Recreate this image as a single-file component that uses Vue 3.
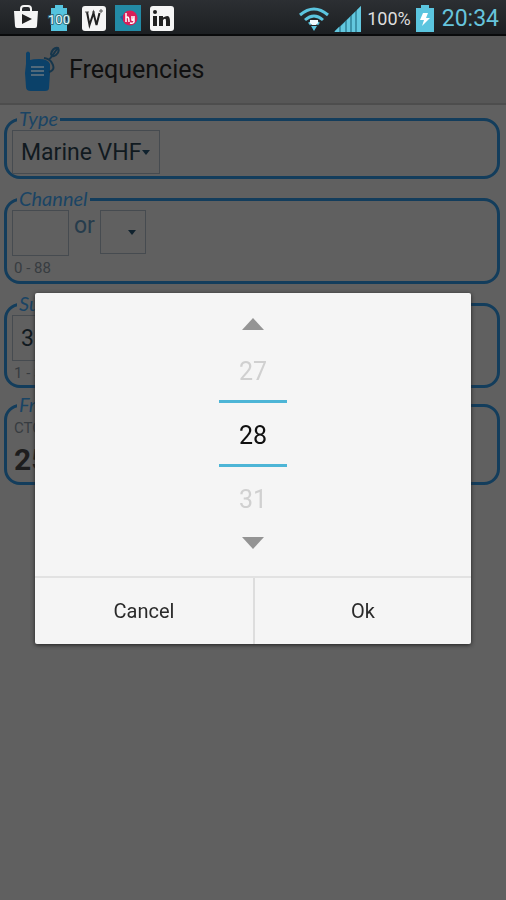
<script setup>
import { ref, computed } from 'vue'

const options = [26, 27, 28, 31, 33]
const index = ref(2)
const open = ref(true)
const type = ref('Marine VHF')
const channel = ref('')
const channelPick = ref('')
const sub = ref('38')

const previous = computed(() => options[index.value - 1])
const current = computed(() => options[index.value])
const next = computed(() => options[index.value + 1])

function step(by) {
  index.value = Math.min(options.length - 2, Math.max(1, index.value + by))
}
</script>

<template>
  <div class="screen">
    <header class="status">
      <div class="notices">
        <svg width="26" height="28" viewBox="0 0 26 28" aria-hidden="true">
          <path d="M8 8V5Q8 2 11 2H15Q18 2 18 5V8" fill="none" stroke="#f5f5f5" stroke-width="2" />
          <path d="M1 7H25L24 22Q24 24 22 24H4Q2 24 2 22Z" fill="#f5f5f5" />
          <path d="M9 10L19 15L9 20Z" fill="#222" />
        </svg>
        <svg class="charge" width="24" height="28" viewBox="0 0 24 28" aria-hidden="true">
          <path d="M8 1H16V4H20V10L18 13L20 19V27H4V19L6 13L4 10V4H8Z" fill="#55c4df" />
          <text x="12" y="20" text-anchor="middle" font-size="13" fill="#e9fbff" stroke="#316d7b" stroke-width="2" paint-order="stroke">100</text>
        </svg>
        <svg width="26" height="28" viewBox="0 0 26 28" aria-hidden="true">
          <rect x="1" y="2" width="24" height="25" rx="3" fill="#f5f5f5" />
          <path d="M6 8L8.500 21L12.500 9L15.500 21L18.500 9" fill="none" stroke="#222" stroke-width="2" />
          <path d="M4 8H8M11 8H14M20 5V9M18 7H22" stroke="#555" stroke-width="1" />
        </svg>
        <svg width="26" height="28" viewBox="0 0 26 28" aria-hidden="true">
          <rect y="1" width="26" height="26" fill="#238aa5" />
          <circle cx="15" cy="14" r="7.500" fill="#d91e58" />
          <path d="M5 13L8 11V17Z" fill="#285ca0" />
          <path d="M11 9V18M11 14Q14 11 14 18M17 12V16Q19 17 19 12V18Q18 20 15 19" fill="none" stroke="#fff" stroke-width="1.500" />
        </svg>
        <svg width="26" height="28" viewBox="0 0 26 28" aria-hidden="true">
          <rect x="1" y="2" width="24" height="25" rx="3" fill="#f5f5f5" />
          <rect x="4" y="12" width="4" height="10" fill="#202020" />
          <circle cx="6" cy="8" r="2" fill="#202020" />
          <path d="M10 12H14V13.500Q21 9 21 17V22H17V17Q17 13 14 16V22H10Z" fill="#202020" />
        </svg>
      </div>
      <div class="system">
        <svg width="32" height="28" viewBox="0 0 32 28" aria-hidden="true">
          <g fill="none" stroke="#5bc5df" stroke-width="3">
            <path d="M2 11Q16 -1 30 11" />
            <path d="M7 16Q16 8 25 16" />
            <path d="M11 20Q16 16 21 20" />
          </g>
          <path d="M12 16H20V19L18 21H14L12 19Z" fill="#effbff" />
          <path d="M13 22H19L16 27Z" fill="#5bc5df" />
        </svg>
        <svg class="signal" width="28" height="28" viewBox="0 0 28 28" aria-hidden="true">
          <path d="M0 28L27 2V28Z" fill="#3c93aa" />
          <path d="M1 28V27L5 23V28ZM7 28V22L11 18V28ZM13 28V16L16 13V28ZM18 28V11L21 8V28ZM23 28V6L27 2V28Z" fill="#63c8df" />
        </svg>
        <span class="percent">100%</span>
        <svg class="battery" width="18" height="28" viewBox="0 0 18 28" aria-hidden="true">
          <path d="M5 1H13V4H18V28H0V4H5Z" fill="#5bc5df" />
          <path d="M7 9H12L10 14H14L6 22L8 16H4Z" fill="#fff" />
        </svg>
        <time>20:34</time>
      </div>
    </header>

    <div class="app-bar">
      <svg width="38" height="48" viewBox="0 0 38 48" aria-hidden="true">
        <path d="M1 7Q3 4 5 7V14Q8 13 14 13Q23 13 25 18V27L24 42Q24 45 20 45H6Q1 45 1 41L0 27L1 18Z" fill="#0b4169" />
        <path d="M6 21H19M6 25H19M6 29H19" stroke="#6a7780" stroke-width="1.500" />
        <path d="M24 26Q31 24 27 17Q25 13 19 12M24 14L30 6M26 8Q28 1 33 2Q35 6 31 9Q27 12 26 8ZM29 7L33 2" fill="none" stroke="#16364c" stroke-width="2" />
      </svg>
      <h1>Frequencies</h1>
    </div>

    <main>
      <fieldset class="type">
        <legend>Type</legend>
        <span class="picker">
          <select v-model="type" aria-label="Type"><option>Marine VHF</option></select>
          <svg width="8" height="5" viewBox="0 0 8 5" aria-hidden="true"><path d="M0 0H8L4 5Z" fill="#10222e" /></svg>
        </span>
      </fieldset>

      <fieldset class="channel">
        <legend>Channel</legend>
        <div class="row">
          <input v-model="channel" class="number" inputmode="numeric" aria-label="Channel">
          <span class="or">or</span>
          <span class="picker small">
            <select v-model="channelPick" aria-label="Choose channel"><option value=""></option></select>
            <svg width="8" height="5" viewBox="0 0 8 5" aria-hidden="true"><path d="M0 0H8L4 5Z" fill="#10222e" /></svg>
          </span>
        </div>
        <p class="hint">0 - 88</p>
      </fieldset>

      <fieldset class="sub">
        <legend>Sub channel</legend>
        <div class="row">
          <input v-model="sub" class="number" inputmode="numeric" aria-label="Sub channel">
        </div>
        <p class="hint">1 - 38</p>
      </fieldset>

      <fieldset class="frequency">
        <legend>Frequency</legend>
        <p class="code">CTCSS</p>
        <strong>250.3</strong>
      </fieldset>
    </main>

    <div v-if="open" class="overlay">
      <section class="dialog" role="dialog" aria-modal="true">
        <div class="wheel">
          <button class="arrow" aria-label="Previous" @click="step(-1)">
            <svg width="22" height="12" viewBox="0 0 22 12"><path d="M0 12L11 0L22 12Z" fill="#949494" /></svg>
          </button>
          <button class="value faded" @click="step(-1)">{{ previous }}</button>
          <output class="value current">{{ current }}</output>
          <button class="value faded" @click="step(1)">{{ next }}</button>
          <button class="arrow" aria-label="Next" @click="step(1)">
            <svg width="22" height="12" viewBox="0 0 22 12"><path d="M0 0H22L11 12Z" fill="#949494" /></svg>
          </button>
        </div>
        <div class="actions">
          <button @click="open = false">Cancel</button>
          <button @click="open = false">Ok</button>
        </div>
      </section>
    </div>
  </div>
</template>

<style>
body {
  margin: 0;
  background: #606060;
}
</style>

<style scoped>
* {
  box-sizing: border-box;
}
.screen {
  min-height: 100vh;
  background: #606060;
  font-family: Roboto, "Liberation Sans", sans-serif;
  color: #111a20;
}
button,
input,
select {
  margin: 0;
  padding: 0;
  border: 0;
  border-radius: 0;
  background: transparent;
  color: inherit;
  font: inherit;
}
svg {
  display: block;
  flex: none;
}
.status {
  display: flex;
  justify-content: space-between;
  height: 36px;
  padding: 4px 7px 0 13px;
  border-bottom: 2px solid #090a0b;
  background: linear-gradient(#2c2f33, #1c1f22);
}
.notices {
  display: flex;
  gap: 8px;
}
.charge {
  margin-right: 2px;
}
.system {
  display: flex;
  color: #66c4dc;
}
.signal {
  margin-left: 4px;
}
.percent {
  margin: 0 5px;
  color: #dedede;
  font-size: 18px;
  line-height: 29px;
}
.battery {
  margin-right: 8px;
}
time {
  font-size: 23px;
  line-height: 30px;
}
.app-bar {
  display: flex;
  align-items: center;
  gap: 6px;
  height: 69px;
  padding: 0 25px;
  border-bottom: 2px solid #4d4d4d;
  background: #575757;
}
h1 {
  margin: 0;
  color: #101010;
  font-size: 25px;
  font-weight: 400;
  line-height: 32px;
}
main {
  display: flex;
  flex-direction: column;
  gap: 10px;
  padding: 4px 6px 0 4px;
}
fieldset {
  min-width: 0;
  margin: 0;
  padding: 1px 5px 0;
  border: 3px solid #133d5c;
  border-radius: 16px;
}
legend {
  height: 20px;
  margin-left: 5px;
  padding: 0 2px;
  color: #1a4464;
  font-family: Lato, sans-serif;
  font-size: 20px;
  font-style: italic;
  line-height: 18px;
}
.type {
  height: 70px;
}
.channel {
  height: 95px;
}
.sub {
  height: 94px;
}
.frequency {
  height: 90px;
  margin-top: -3px;
}
.row {
  display: flex;
}
.picker {
  display: grid;
  grid-template-columns: 1fr auto;
  align-items: center;
  width: 148px;
  height: 44px;
  border: 1px solid #464b50;
}
.picker select {
  grid-area: 1 / 1 / 2 / 3;
  width: 100%;
  height: 100%;
  padding-left: 8px;
  appearance: none;
  font-size: 23px;
}
.picker svg {
  grid-area: 1 / 2;
  margin-right: 9px;
  pointer-events: none;
}
.picker.small {
  width: 46px;
}
.number {
  width: 57px;
  height: 46px;
  padding-left: 8px;
  border: 1px solid #464b50;
  font-size: 23px;
}
.or {
  margin: 0 5px;
  color: #263c4c;
  font-size: 23px;
  line-height: 32px;
}
.hint,
.code {
  margin: 0;
  padding-left: 2px;
  color: #373c40;
  font-size: 15px;
  line-height: 24px;
}
strong {
  display: block;
  padding-left: 2px;
  color: #1d1d1d;
  font-size: 30px;
  line-height: 40px;
}
.overlay {
  position: fixed;
  inset: 36px 0 0;
  display: flex;
  align-items: center;
  justify-content: center;
  padding: 0 35px;
}
.dialog {
  width: 100%;
  border-radius: 2px;
  background: #f5f5f5;
  box-shadow: 0 1px 4px #202020;
}
.wheel {
  display: flex;
  flex-direction: column;
  align-items: center;
  height: 283px;
  padding-top: 16px;
}
.arrow {
  display: grid;
  place-items: center;
  width: 68px;
  height: 30px;
}
.value {
  display: block;
  width: 68px;
  height: 61px;
  font-size: 25px;
  line-height: 65px;
  text-align: center;
}
.faded {
  color: #d0d0d0;
}
.current {
  height: 67px;
  border: solid #4db5d6;
  border-width: 3px 0;
  color: #101010;
}
.actions {
  display: grid;
  grid-template-columns: 1fr 1fr;
  border-top: 2px solid #e2e2e2;
}
.actions button {
  height: 66px;
  color: #2a2a2a;
  font-size: 20px;
}
.actions button + button {
  border-left: 2px solid #dddddd;
}
</style>
